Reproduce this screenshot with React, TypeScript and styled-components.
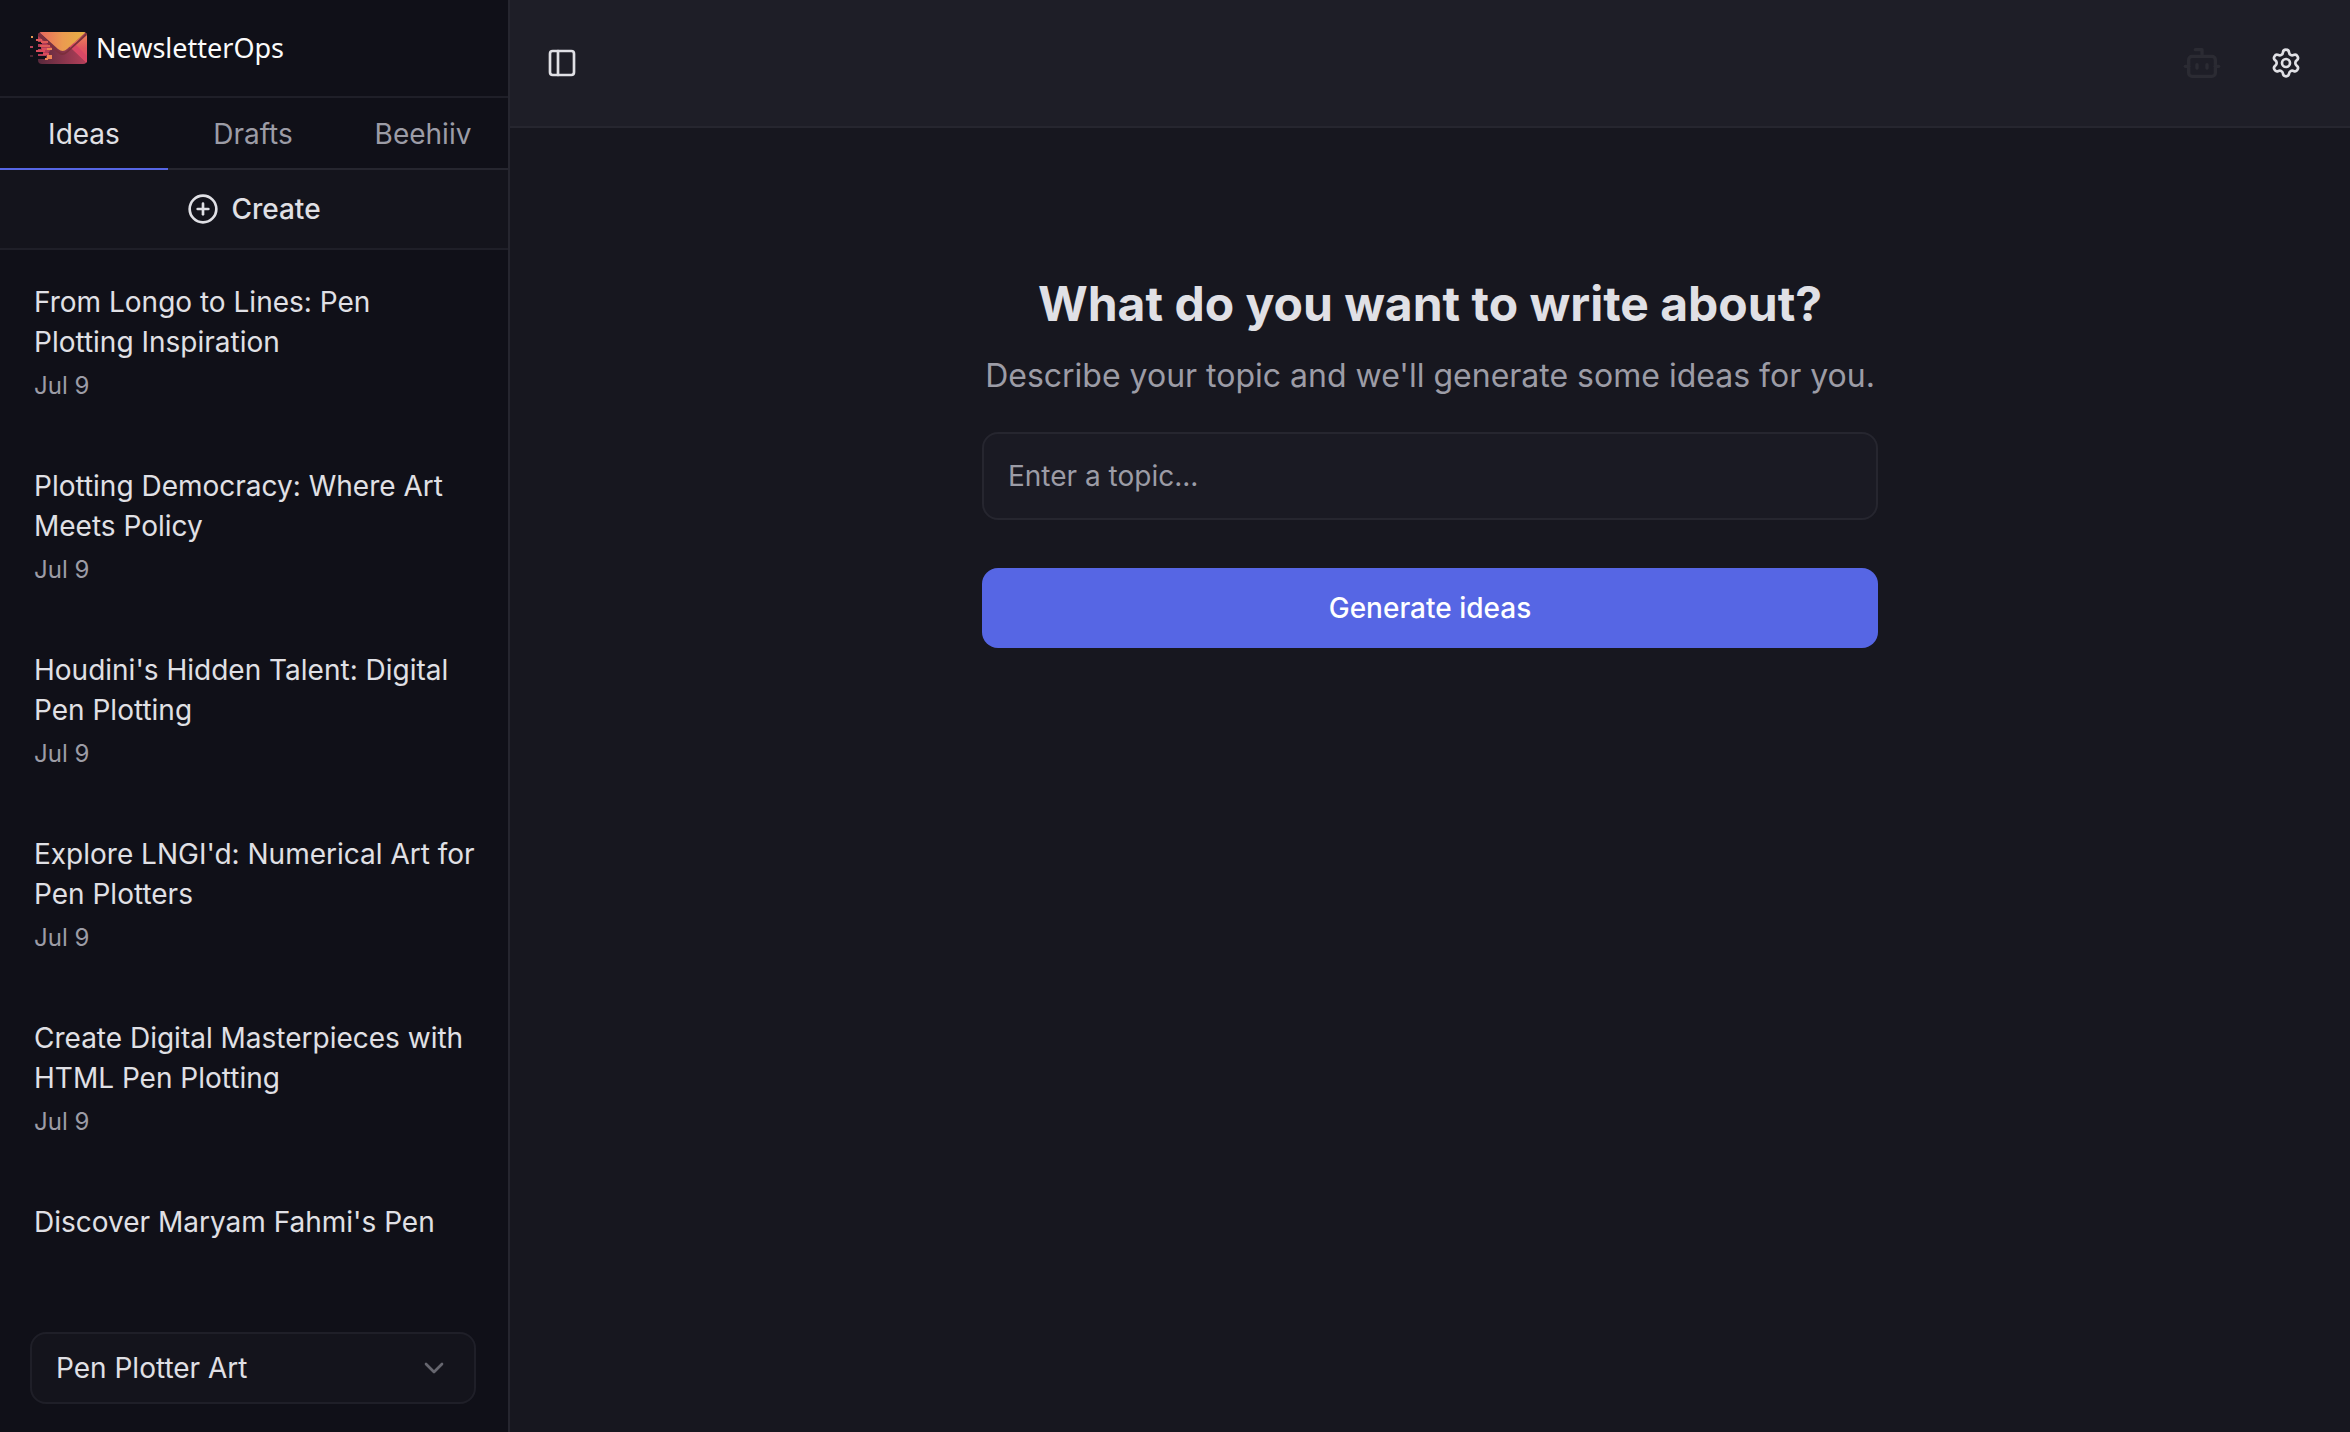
import React, { useState } from "react";
import styled, { createGlobalStyle } from "styled-components";
import { Bot, ChevronDown, CirclePlus, PanelLeft, Settings } from "lucide-react";

const color = {
  sidebar: "#101018",
  raised: "#14141c",
  page: "#17171f",
  header: "#1e1e27",
  field: "#1a1a23",
  line: "#26262f",
  softLine: "#1f1f28",
  text: "#e0e0e5",
  muted: "#9c9ca6",
  accent: "#5666e4",
};

const GlobalStyle = createGlobalStyle`
  *, *::before, *::after { box-sizing: border-box; }
  body {
    margin: 0;
    background: ${color.page};
    color: ${color.text};
    font-family: Inter, "Liberation Sans", sans-serif;
    font-size: 28px;
    line-height: 40px;
  }
  button, input, select { font: inherit; color: inherit; }
  h1, p, ul { margin: 0; padding: 0; }
`;

const Shell = styled.div`
  display: grid;
  grid-template-columns: 510px minmax(0, 1fr);
  height: 100vh;
`;

const Sidebar = styled.aside`
  display: flex;
  flex-direction: column;
  min-height: 0;
  background: ${color.sidebar};
  border-right: 2px solid ${color.line};
`;

const Brand = styled.a`
  display: flex;
  align-items: center;
  gap: 8px;
  height: 98px;
  padding: 0 30px;
  border-bottom: 2px solid ${color.softLine};
  color: #fbfbfb;
  font-family: "Noto Sans", "Open Sans", sans-serif;
  font-size: 27px;
  text-decoration: none;
`;

const Tabs = styled.div`
  display: grid;
  grid-template-columns: 168px 1fr 1fr;
`;

const Tab = styled.button<{ $active: boolean }>`
  height: 72px;
  padding: 2px 0 0;
  background: none;
  border: 0;
  border-bottom: 2px solid ${(p) => (p.$active ? color.accent : color.line)};
  color: ${(p) => (p.$active ? color.text : color.muted)};
  cursor: pointer;
`;

const CreateButton = styled.button`
  display: flex;
  align-items: center;
  justify-content: center;
  gap: 12px;
  height: 80px;
  padding: 0;
  background: ${color.raised};
  border: 0;
  border-bottom: 2px solid ${color.softLine};
  font-weight: 500;
  cursor: pointer;
`;

const IdeaList = styled.ul`
  flex: 1;
  min-height: 0;
  overflow-y: auto;
  scrollbar-width: none;
  list-style: none;
`;

const IdeaLink = styled.a`
  display: flex;
  flex-direction: column;
  gap: 6px;
  padding: 32px 32px 30px 34px;
  color: inherit;
  text-decoration: none;
`;

const IdeaDate = styled.time`
  color: ${color.muted};
  font-size: 24px;
  line-height: 36px;
`;

const SidebarFooter = styled.div`
  padding: 80px 32px 28px 30px;
`;

const SelectBox = styled.div`
  display: grid;
  align-items: center;

  > * { grid-area: 1 / 1; }
  > svg {
    justify-self: end;
    margin-right: 26px;
    color: #66666f;
    pointer-events: none;
  }
`;

const Select = styled.select`
  width: 100%;
  height: 72px;
  padding: 0 64px 0 24px;
  appearance: none;
  background: ${color.raised};
  border: 2px solid ${color.softLine};
  border-radius: 16px;
`;

const Main = styled.main`
  display: flex;
  flex-direction: column;
  min-width: 0;
`;

const TopBar = styled.header`
  display: flex;
  align-items: center;
  justify-content: space-between;
  height: 128px;
  padding: 0 32px;
  background: ${color.header};
  border-bottom: 2px solid ${color.line};
`;

const Actions = styled.div`
  display: flex;
  gap: 20px;
`;

const IconButton = styled.button`
  display: grid;
  place-items: center;
  width: 64px;
  height: 64px;
  padding: 0;
  background: none;
  border: 0;
  border-radius: 12px;
  cursor: pointer;

  &:disabled { color: #2b2b33; cursor: default; }
`;

const ToggleButton = styled(IconButton)`
  width: 40px;
`;

const Form = styled.form`
  display: flex;
  flex-direction: column;
  width: 100%;
  max-width: 896px;
  margin: 0 auto;
  padding-top: 144px;
`;

const Title = styled.h1`
  font-size: 48px;
  font-weight: 700;
  line-height: 64px;
  text-align: center;
`;

const Hint = styled.label`
  margin: 16px 0 32px;
  color: ${color.muted};
  font-size: 32px;
  line-height: 48px;
  text-align: center;
`;

const TopicInput = styled.input`
  height: 88px;
  padding: 0 24px;
  background: ${color.field};
  border: 2px solid ${color.line};
  border-radius: 16px;

  &::placeholder { color: ${color.muted}; opacity: 1; }
`;

const SubmitButton = styled.button`
  height: 80px;
  margin-top: 48px;
  background: ${color.accent};
  border: 0;
  border-radius: 16px;
  color: #fff;
  font-weight: 500;
  cursor: pointer;
`;

function Logo() {
  return (
    <svg width="58" height="32" viewBox="0 0 58 32" aria-hidden="true">
      <defs>
        <linearGradient id="flap" x1="0" y1="0" x2="1" y2="0">
          <stop offset="0" stopColor="#e9665e" />
          <stop offset="0.5" stopColor="#eb9a50" />
          <stop offset="1" stopColor="#e6b343" />
        </linearGradient>
        <linearGradient id="base" x1="0" y1="0" x2="1" y2="0">
          <stop offset="0" stopColor="#59293c" />
          <stop offset="1" stopColor="#b5405a" />
        </linearGradient>
        <linearGradient id="side" x1="0" y1="0" x2="0" y2="1">
          <stop offset="0" stopColor="#ef8a58" />
          <stop offset="0.5" stopColor="#e0565f" />
          <stop offset="1" stopColor="#e04a66" />
        </linearGradient>
        <clipPath id="body"><rect x="8" width="49" height="32" rx="4" /></clipPath>
      </defs>
      <g clipPath="url(#body)">
        <path d="M8 0h49v32H8z" fill="url(#base)" />
        <path d="M8 0l15 15-8 10H8z" fill="#b53c56" />
        <path d="M57 1v30L39 14z" fill="url(#side)" />
        <path d="M57 31L39 14l4-4 14 14z" fill="#d94865" />
        <path d="M8 0l20 19q5 4 9 0L57 0v3L37 21q-5 4-9 0L8 4z" fill="#7c2f3c" />
        <path d="M9 0h47L37 17q-4 4-9 0z" fill="url(#flap)" />
      </g>
      <path d="M8 10h4v2H8zM8 15h3v2H8zM8 20h5v2H8zM8 24h8v3H8z" fill={color.sidebar} />
      <path d="M6 7h6v2H6zM11 9h7v2h-7zM10 13h10v2H10z" fill="#df5b58" />
      <path d="M6 18h9v2H6zM12 16h6v2h-6zM13 21h6v2h-6z" fill="#d94c5c" />
      <path d="M17 16h5v2h-5zM17 23h5v4h-5zM15 26h3v2h-3z" fill="#ee8355" />
      <path d="M1 4h2v2H1z" fill="#e89b55" />
      <path d="M0 14h3v2H0z" fill="#b84458" />
      <path d="M0 23h3v2H0z" fill="#4c2733" />
    </svg>
  );
}

const tabs = ["Ideas", "Drafts", "Beehiiv"];

const ideas = [
  "From Longo to Lines: Pen Plotting Inspiration",
  "Plotting Democracy: Where Art Meets Policy",
  "Houdini's Hidden Talent: Digital Pen Plotting",
  "Explore LNGI'd: Numerical Art for Pen Plotters",
  "Create Digital Masterpieces with HTML Pen Plotting",
  "Discover Maryam Fahmi's Pen",
];

export default function App() {
  const [active, setActive] = useState("Ideas");
  const [topic, setTopic] = useState("");

  return (
    <>
      <GlobalStyle />
      <Shell>
        <Sidebar>
          <Brand href="#">
            <Logo />
            <span>NewsletterOps</span>
          </Brand>
          <Tabs role="tablist">
            {tabs.map((tab) => (
              <Tab
                key={tab}
                type="button"
                role="tab"
                aria-selected={active === tab}
                $active={active === tab}
                onClick={() => setActive(tab)}
              >
                {tab}
              </Tab>
            ))}
          </Tabs>
          <CreateButton type="button">
            <CirclePlus size={32} />
            Create
          </CreateButton>
          <IdeaList>
            {ideas.map((idea, index) => (
              <li key={idea}>
                <IdeaLink href="#">
                  <span>{idea}</span>
                  {index < 5 && <IdeaDate dateTime="07-09">Jul 9</IdeaDate>}
                </IdeaLink>
              </li>
            ))}
          </IdeaList>
          <SidebarFooter>
            <SelectBox>
              <Select aria-label="Publication">
                <option>Pen Plotter Art</option>
              </Select>
              <ChevronDown size={32} />
            </SelectBox>
          </SidebarFooter>
        </Sidebar>
        <Main>
          <TopBar>
            <ToggleButton type="button" aria-label="Toggle sidebar">
              <PanelLeft size={32} />
            </ToggleButton>
            <Actions>
              <IconButton type="button" aria-label="Assistant" disabled>
                <Bot size={40} />
              </IconButton>
              <IconButton type="button" aria-label="Settings">
                <Settings size={32} />
              </IconButton>
            </Actions>
          </TopBar>
          <Form onSubmit={(event) => event.preventDefault()}>
            <Title>What do you want to write about?</Title>
            <Hint htmlFor="topic">Describe your topic and we'll generate some ideas for you.</Hint>
            <TopicInput
              id="topic"
              placeholder="Enter a topic..."
              value={topic}
              onChange={(event) => setTopic(event.target.value)}
            />
            <SubmitButton type="submit">Generate ideas</SubmitButton>
          </Form>
        </Main>
      </Shell>
    </>
  );
}
